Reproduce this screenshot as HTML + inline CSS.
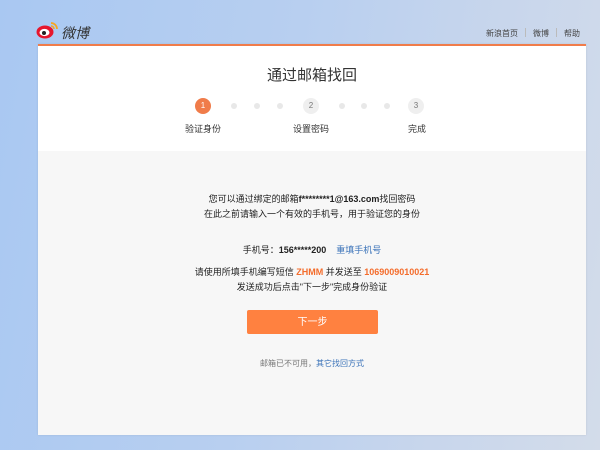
<!DOCTYPE html>
<html><head><meta charset="utf-8"><style>
*{margin:0;padding:0;box-sizing:border-box}
body{width:600px;height:450px;overflow:hidden;font-family:"Liberation Sans","Noto Sans CJK SC",sans-serif;background:linear-gradient(100deg,#a9c8f2 0%,#b8cff0 45%,#c8d6ec 75%,#d3dcea 100%);position:relative;color:#333}
.abs{position:absolute}
.card{left:38px;top:44px;width:548px;height:391px;background:#f7f7f7;border-top:2px solid #f07c4a;box-shadow:0 0 2px rgba(0,0,0,.1)}
.top{left:0;top:0;width:548px;height:105px;background:#fff}
.c{text-align:center;width:548px;left:0;font-size:9px;line-height:12px;color:#222}
.dot{width:6px;height:6px;border-radius:3px;background:#e8e8e8;top:57px}
.cir{width:16px;height:16px;border-radius:8px;background:#efefef;color:#777;font-size:8px;line-height:16px;text-align:center;top:52px}
.lab{font-size:9px;top:76px;color:#333}
.nav{top:28px;font-size:8px;color:#444}
</style></head><body>
<svg class="abs" style="left:36px;top:20px" width="25" height="20" viewBox="0 0 25 20">
<ellipse cx="9" cy="12" rx="8.5" ry="6.5" fill="#e6162d"/>
<ellipse cx="8.5" cy="12.5" rx="5" ry="3.6" fill="#fff"/>
<circle cx="8" cy="13" r="2" fill="#222"/>
<path d="M15 3a6 6 0 0 1 6 6" stroke="#f5a623" stroke-width="1.8" fill="none"/>
<path d="M15 6a3 3 0 0 1 3 3" stroke="#f5a623" stroke-width="1.6" fill="none"/>
</svg>
<div class="abs" style="left:61px;top:23px;font-size:14px;font-style:italic;color:#333">微博</div>
<div class="abs nav" style="left:486px">新浪首页</div>
<div class="abs" style="left:525px;top:28px;width:1px;height:9px;background:#bbb"></div>
<div class="abs nav" style="left:533px">微博</div>
<div class="abs" style="left:556px;top:28px;width:1px;height:9px;background:#bbb"></div>
<div class="abs nav" style="left:564px">帮助</div>
<div class="abs card">
<div class="abs top">
<div class="abs c" style="top:20px;font-size:15px;line-height:20px;color:#333">通过邮箱找回</div>
<div class="abs cir" style="left:157px;background:#f07c4a;color:#fff">1</div>
<div class="abs dot" style="left:193px"></div><div class="abs dot" style="left:216px"></div><div class="abs dot" style="left:239px"></div>
<div class="abs cir" style="left:265px">2</div>
<div class="abs dot" style="left:301px"></div><div class="abs dot" style="left:323px"></div><div class="abs dot" style="left:346px"></div>
<div class="abs cir" style="left:370px">3</div>
<div class="abs lab" style="left:147px">验证身份</div>
<div class="abs lab" style="left:255px">设置密码</div>
<div class="abs lab" style="left:370px">完成</div>
</div>
<div class="abs c" style="top:147px">您可以通过绑定的邮箱<b>f********1@163.com</b>找回密码</div>
<div class="abs c" style="top:162px">在此之前请输入一个有效的手机号，用于验证您的身份</div>
<div class="abs c" style="top:198px">手机号：<b>156*****200</b>&nbsp;&nbsp;&nbsp;&nbsp;<span style="color:#3b73b9">重填手机号</span></div>
<div class="abs c" style="top:220px">请使用所填手机编写短信 <b style="color:#f46c2b">ZHMM</b> 并发送至 <b style="color:#f46c2b">1069009010021</b></div>
<div class="abs c" style="top:235px">发送成功后点击"下一步"完成身份验证</div>
<div class="abs" style="left:209px;top:264px;width:131px;height:24px;background:#ff8140;border-radius:2px;color:#fff;font-size:10px;line-height:26px;text-align:center">下一步</div>
<div class="abs c" style="top:312px;font-size:8px;color:#777">邮箱已不可用，<span style="color:#3b73b9">其它找回方式</span></div>
</div>
</body></html>
